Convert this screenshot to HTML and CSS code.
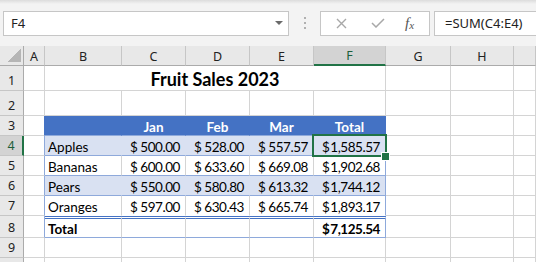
FILE: index.html
```html
<!DOCTYPE html>
<html lang="en">
<head>
    <meta charset="UTF-8">
    <title>Fruit Sales 2023</title>
    <link rel="stylesheet" href="styles.css">
</head>
<body>
    <div class="toolbar">
        <div class="namebox">
            <span>F4</span>
            <span class="arrow"></span>
        </div>
        <div class="grip"><i></i><i></i><i></i></div>
        <div class="fxbtns">
            <svg class="cancel" width="11" height="11" viewBox="0 0 11 11"><path d="M1 1L10 10M10 1L1 10" stroke="#a8a8a8" stroke-width="1.4" fill="none"/></svg>
            <svg class="enter" width="14" height="10" viewBox="0 0 14 10"><path d="M1 5L5 9L13 1" stroke="#a8a8a8" stroke-width="1.5" fill="none"/></svg>
            <span class="fx">f<sub>x</sub></span>
        </div>
        <div class="formula">=SUM(C4:E4)</div>
    </div>

    <div class="sheet">
        <div class="row head">
            <div class="c corner"></div>
            <div class="c ch">A</div>
            <div class="c ch">B</div>
            <div class="c ch">C</div>
            <div class="c ch">D</div>
            <div class="c ch">E</div>
            <div class="c ch sel">F</div>
            <div class="c ch">G</div>
            <div class="c ch">H</div>
            <div class="c ch"></div>
        </div>

        <div class="row tall">
            <div class="c rh">1</div>
            <div class="c"></div>
            <div class="c title">Fruit Sales 2023</div>
            <div class="c"></div>
            <div class="c"></div>
            <div class="c"></div>
        </div>

        <div class="row tall">
            <div class="c rh">2</div>
            <div class="c"></div><div class="c"></div><div class="c"></div><div class="c"></div>
            <div class="c"></div><div class="c"></div><div class="c"></div><div class="c"></div><div class="c"></div>
        </div>

        <div class="row">
            <div class="c rh">3</div>
            <div class="c edge-h"></div>
            <div class="c th"></div>
            <div class="c th">Jan</div>
            <div class="c th">Feb</div>
            <div class="c th">Mar</div>
            <div class="c th">Total</div>
            <div class="c"></div><div class="c"></div><div class="c"></div>
        </div>

        <div class="row">
            <div class="c rh sel">4</div>
            <div class="c edge"></div>
            <div class="c t band">Apples</div>
            <div class="c t band num"><span>$</span><span>500.00</span></div>
            <div class="c t band num"><span>$</span><span>528.00</span></div>
            <div class="c t band num"><span>$</span><span>557.57</span></div>
            <div class="c t band num last active"><span>$</span><span>1,585.57</span></div>
            <div class="c"></div><div class="c"></div><div class="c"></div>
        </div>

        <div class="row">
            <div class="c rh">5</div>
            <div class="c edge"></div>
            <div class="c t">Bananas</div>
            <div class="c t num"><span>$</span><span>600.00</span></div>
            <div class="c t num"><span>$</span><span>633.60</span></div>
            <div class="c t num"><span>$</span><span>669.08</span></div>
            <div class="c t num last"><span>$</span><span>1,902.68</span></div>
            <div class="c"></div><div class="c"></div><div class="c"></div>
        </div>

        <div class="row">
            <div class="c rh">6</div>
            <div class="c edge"></div>
            <div class="c t band">Pears</div>
            <div class="c t band num"><span>$</span><span>550.00</span></div>
            <div class="c t band num"><span>$</span><span>580.80</span></div>
            <div class="c t band num"><span>$</span><span>613.32</span></div>
            <div class="c t band num last"><span>$</span><span>1,744.12</span></div>
            <div class="c"></div><div class="c"></div><div class="c"></div>
        </div>

        <div class="row">
            <div class="c rh">7</div>
            <div class="c edge"></div>
            <div class="c t open">Oranges</div>
            <div class="c t open num"><span>$</span><span>597.00</span></div>
            <div class="c t open num"><span>$</span><span>630.43</span></div>
            <div class="c t open num"><span>$</span><span>665.74</span></div>
            <div class="c t open num last"><span>$</span><span>1,893.17</span></div>
            <div class="c"></div><div class="c"></div><div class="c"></div>
        </div>

        <div class="row total">
            <div class="c rh">8</div>
            <div class="c edge"></div>
            <div class="c t sum">Total</div>
            <div class="c t sum"></div>
            <div class="c t sum"></div>
            <div class="c t sum"></div>
            <div class="c t sum num last"><span>$</span><span>7,125.54</span></div>
            <div class="c"></div><div class="c"></div><div class="c"></div>
        </div>

        <div class="row">
            <div class="c rh">9</div>
            <div class="c"></div><div class="c"></div><div class="c"></div><div class="c"></div>
            <div class="c"></div><div class="c"></div><div class="c"></div><div class="c"></div><div class="c"></div>
        </div>

        <div class="row">
            <div class="c rh"></div>
            <div class="c"></div><div class="c"></div><div class="c"></div><div class="c"></div>
            <div class="c"></div><div class="c"></div><div class="c"></div><div class="c"></div><div class="c"></div>
        </div>
    </div>
</body>
</html>
```

FILE: styles.css
```css
* {
    box-sizing: border-box;
}

body {
    margin: 0;
    width: 536px;
    height: 262px;
    overflow: hidden;
    background: #fff;
    font-family: Lato, "Liberation Sans", sans-serif;
}

/* formula bar */
.toolbar {
    height: 46px;
    display: flex;
    align-items: center;
    padding-left: 3px;
    background: linear-gradient(#dcdcdc, #f3f3f3 4px) #f3f3f3;
    font-family: "Noto Sans", sans-serif;
    font-size: 13px;
    color: #222;
}

.namebox,
.fxbtns,
.formula {
    height: 25px;
    background: #fff;
    border: 1px solid #c6c6c6;
    display: flex;
    align-items: center;
}

.namebox {
    width: 286px;
    justify-content: space-between;
    padding: 0 5px 0 7px;
}

.arrow {
    width: 0;
    height: 0;
    border-left: 4px solid transparent;
    border-right: 4px solid transparent;
    border-top: 4px solid #6a6a6a;
}

.grip {
    width: 31px;
    display: flex;
    flex-direction: column;
    align-items: center;
    gap: 3px;
}

.grip i {
    width: 2px;
    height: 2px;
    background: #b0b0b0;
}

.fxbtns {
    width: 110px;
    padding-left: 15px;
}

.cancel {
    margin-right: 24px;
}

.enter {
    margin-right: 20px;
}

.fx {
    font-family: "Liberation Serif", serif;
    font-style: italic;
    font-size: 15px;
    color: #555;
}

.fx sub {
    font-size: 11px;
    vertical-align: -1px;
}

.formula {
    flex: 1;
    margin-left: 4px;
    border-right: none;
    padding-left: 10px;
}

/* grid */
.row {
    display: grid;
    grid-template-columns: 24px 21px 77px 64px 64px 64px 72px 65px 63px 1fr;
    height: 20px;
}

.row.tall {
    height: 25px;
}

.row.total {
    height: 22px;
}

.c {
    display: flex;
    align-items: flex-end;
    padding: 0 3px;
    border-right: 1px solid #d4d4d4;
    border-bottom: 1px solid #d4d4d4;
    font-size: 13.5px;
    color: #000;
    white-space: nowrap;
    overflow: hidden;
}

.corner,
.ch,
.rh {
    background: #e8e8e8;
    font-family: "Noto Sans", sans-serif;
    font-size: 12.5px;
    color: #222;
    justify-content: center;
}

.corner {
    border-right-color: #ababab;
    border-bottom-color: #ababab;
    background: linear-gradient(to top left, #b5b5b5 50%, transparent 50%) no-repeat right 2px bottom 3px / 13px 13px, #e8e8e8;
}

.ch {
    border-right-color: #c6c6c6;
    border-bottom-color: #ababab;
    padding-bottom: 0;
}

.rh {
    border-right-color: #ababab;
    border-bottom-color: #c6c6c6;
    padding-bottom: 1px;
}

.ch.sel {
    background: #d3d3d3;
    border-bottom: 2px solid #217346;
    color: #1d5e3a;
}

.rh.sel {
    background: #d3d3d3;
    border-right: 2px solid #217346;
    color: #1d5e3a;
}

.title {
    grid-column: span 5;
    justify-content: center;
    font-weight: bold;
    font-size: 18px;
    border-right-color: #d4d4d4;
}

/* table B3:F8 */
.edge {
    border-right-color: #8ea9db;
}

.edge-h {
    border-right-color: #4472c4;
}

.th {
    background: #4472c4;
    color: #fff;
    font-weight: bold;
    justify-content: center;
    border-right-color: #4472c4;
    border-bottom-color: #8ea9db;
}

.t {
    border-bottom-color: #8ea9db;
}

.t.band {
    background: #d9e1f2;
    border-right-color: #d9e1f2;
}

.t.open {
    border-bottom-color: #fff;
}

.t.sum {
    border-top: 3px double #4472c4;
    font-weight: bold;
}

.t.last {
    border-right-color: #8ea9db;
}

.num {
    justify-content: space-between;
    padding: 0 5px 0 8px;
}

.num span:last-child {
    letter-spacing: -0.45px;
}

.active {
    position: relative;
    overflow: visible;
}

.active::after {
    content: "";
    position: absolute;
    top: -2px;
    left: -2px;
    right: -2px;
    bottom: -2px;
    border: 2px solid #217346;
}

.active::before {
    content: "";
    position: absolute;
    right: -5px;
    bottom: -6px;
    width: 7px;
    height: 7px;
    background: #217346;
    border: 1px solid #fff;
    z-index: 1;
}
```
